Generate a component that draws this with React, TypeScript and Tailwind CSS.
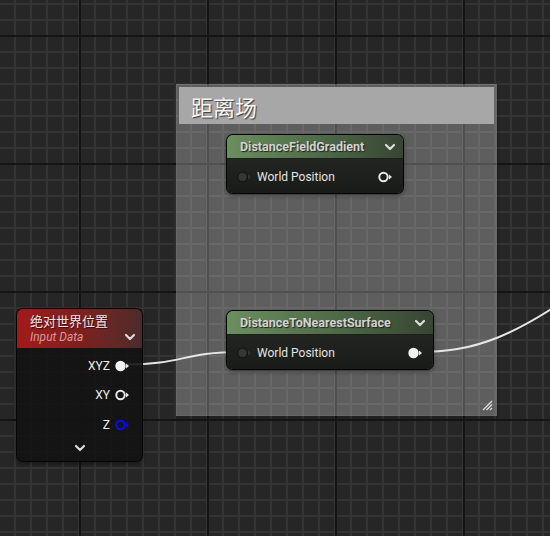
import React from "react";

const W = 550;
const H = 536;

function Grid() {
  const minorV: number[] = [];
  for (let x = 14; x < W; x += 16) minorV.push(x);
  const minorH: number[] = [];
  for (let y = 3; y < H; y += 16) minorH.push(y);
  const majorV = [79, 207, 335, 463];
  const majorH = [35, 163, 291, 419];
  return (
    <svg className="absolute inset-0" width={W} height={H}>
      <rect width={W} height={H} fill="#262626" />
      {minorV.map((x) => (
        <rect key={"v" + x} x={x} y={0} width={2} height={H} fill="#343434" />
      ))}
      {minorH.map((y) => (
        <rect key={"h" + y} x={0} y={y} width={W} height={2} fill="#343434" />
      ))}
      {majorV.map((x) => (
        <rect key={"mv" + x} x={x} y={0} width={2} height={H} fill="#141414" />
      ))}
      {majorH.map((y) => (
        <rect key={"mh" + y} x={0} y={y} width={W} height={2} fill="#141414" />
      ))}
    </svg>
  );
}

function Chevron({ className = "" }: { className?: string }) {
  return (
    <svg width="12" height="8" viewBox="0 0 12 8" className={className}>
      <polyline points="2,2 6,6 10,2" fill="none" stroke="#dcdcdc" strokeWidth="2.2" strokeLinecap="round" strokeLinejoin="round" />
    </svg>
  );
}

type PinKind = "dark" | "ring" | "filled" | "blue";

function Pin({ kind }: { kind: PinKind }) {
  let circle;
  if (kind === "dark") {
    circle = <circle cx="5.5" cy="6" r="4.8" fill="#363636" stroke="#101010" strokeWidth="1" />;
  } else if (kind === "ring") {
    circle = <circle cx="5.5" cy="6" r="4.2" fill="none" stroke="#e8e8e8" strokeWidth="2" />;
  } else if (kind === "filled") {
    circle = <circle cx="5.5" cy="6" r="5.2" fill="#f2f2f2" />;
  } else {
    circle = <circle cx="5.5" cy="6" r="4.2" fill="none" stroke="#0a0aff" strokeWidth="2" />;
  }
  const tri = kind === "dark" ? "#363636" : kind === "blue" ? "#0a0aff" : "#e8e8e8";
  return (
    <svg width="15" height="12" viewBox="0 0 15 12" className="shrink-0">
      {circle}
      <polygon points="11,3.5 14,6 11,8.5" fill={tri} />
    </svg>
  );
}

function MaterialNode({
  left,
  top,
  width,
  title,
  outPin,
}: {
  left: string;
  top: string;
  width: string;
  title: string;
  outPin: PinKind;
}) {
  return (
    <div
      className={`absolute ${left} ${top} ${width} h-[58px] rounded-[6px] overflow-hidden flex flex-col shadow-[0_0_0_1px_#050505,0_2px_5px_rgba(0,0,0,0.55)] font-['Roboto',sans-serif]`}
    >
      <div className="h-[24px] flex items-center justify-between pl-[13px] pr-[7px] bg-gradient-to-r from-[#6b8f5f] via-[#506c49] to-[#374533] border-b border-[#1a1f18]">
        <span className="mt-[2px] text-[12.5px] font-bold text-[#d2d2d2] [text-shadow:1px_1px_1px_#1a2418]">{title}</span>
        <Chevron className="mt-[1px]" />
      </div>
      <div className="flex-1 flex items-center justify-between pl-[10px] pr-[10px] pt-[1px] bg-gradient-to-b from-[#222522] to-[#191b19]">
        <div className="flex items-center gap-[5px]">
          <Pin kind="dark" />
          <span className="text-[12px] text-[#e4e4e4]">World Position</span>
        </div>
        <Pin kind={outPin} />
      </div>
    </div>
  );
}

export default function App() {
  return (
    <div className="relative w-[550px] h-[536px] overflow-hidden bg-[#262626]">
      <Grid />

      {/* comment box */}
      <div className="absolute left-[176px] top-[84px] w-[321px] h-[332px] bg-[rgba(255,255,255,0.26)] border border-[rgba(255,255,255,0.06)] shadow-[0_1px_0_2px_rgba(0,0,0,0.12)] p-[2px]">
        <div className="h-[37px] bg-[#a7a7a7] flex items-center pl-[12px]">
          <span className="text-[22px] leading-none text-[#f4f4f4] font-['Noto_Sans_CJK_SC','Noto_Sans',sans-serif] [text-shadow:1px_1px_1px_#3a3a3a]">
            距离场
          </span>
        </div>
        <svg className="absolute right-[3px] bottom-[4px]" width="12" height="12" viewBox="0 0 12 12">
          <line x1="11" y1="2" x2="2" y2="11" stroke="#dedede" strokeWidth="1.2" />
          <line x1="11" y1="5.5" x2="5.5" y2="11" stroke="#dedede" strokeWidth="1.2" />
          <line x1="11" y1="9" x2="9" y2="11" stroke="#dedede" strokeWidth="1.2" />
        </svg>
      </div>

      {/* wires */}
      <svg className="absolute inset-0" width={W} height={H}>
        <path d="M 126 364.5 C 185 364.5, 180 352, 242 352" fill="none" stroke="#e6e6e6" strokeWidth="2" />
        <path d="M 418 352 C 472 352, 515 340, 604 272" fill="none" stroke="#e6e6e6" strokeWidth="2" />
      </svg>

      <MaterialNode left="left-[227px]" top="top-[135px]" width="w-[176px]" title="DistanceFieldGradient" outPin="ring" />
      <MaterialNode left="left-[227px]" top="top-[311px]" width="w-[206px]" title="DistanceToNearestSurface" outPin="filled" />

      {/* input data node */}
      <div className="absolute left-[17px] top-[309px] w-[125px] h-[152px] rounded-[6px] overflow-hidden flex flex-col shadow-[0_0_0_1px_#050505,0_2px_5px_rgba(0,0,0,0.55)] bg-[rgba(18,19,18,0.9)]">
        <div className="h-[39px] flex items-center justify-between pl-[13px] pr-[6px] bg-gradient-to-r from-[#a21a1a] via-[#7e1f1f] to-[#4c2b2b]">
          <div className="flex flex-col">
            <span className="text-[13px] leading-[17px] text-[#f0e6e6] font-['Noto_Sans_CJK_SC','Noto_Sans',sans-serif] [text-shadow:1px_1px_1px_#3a0a0a]">
              绝对世界位置
            </span>
            <span className="text-[12px] leading-[16px] italic text-[#d69a9a] font-['Roboto',sans-serif]">Input Data</span>
          </div>
          <Chevron className="mt-[16px]" />
        </div>
        <div className="flex-1 flex flex-col items-end pr-[12px] pt-[10px] font-['Roboto',sans-serif] text-[12px] text-[#ececec]">
          <div className="h-[14px] flex items-center gap-[5px] mt-[1px]">
            <span>XYZ</span>
            <Pin kind="filled" />
          </div>
          <div className="h-[14px] flex items-center gap-[5px] mt-[15px]">
            <span>XY</span>
            <Pin kind="ring" />
          </div>
          <div className="h-[14px] flex items-center gap-[5px] mt-[16px]">
            <span>Z</span>
            <Pin kind="blue" />
          </div>
          <div className="self-stretch flex justify-center pl-[12px] mt-[12px]">
            <Chevron />
          </div>
        </div>
      </div>
    </div>
  );
}
